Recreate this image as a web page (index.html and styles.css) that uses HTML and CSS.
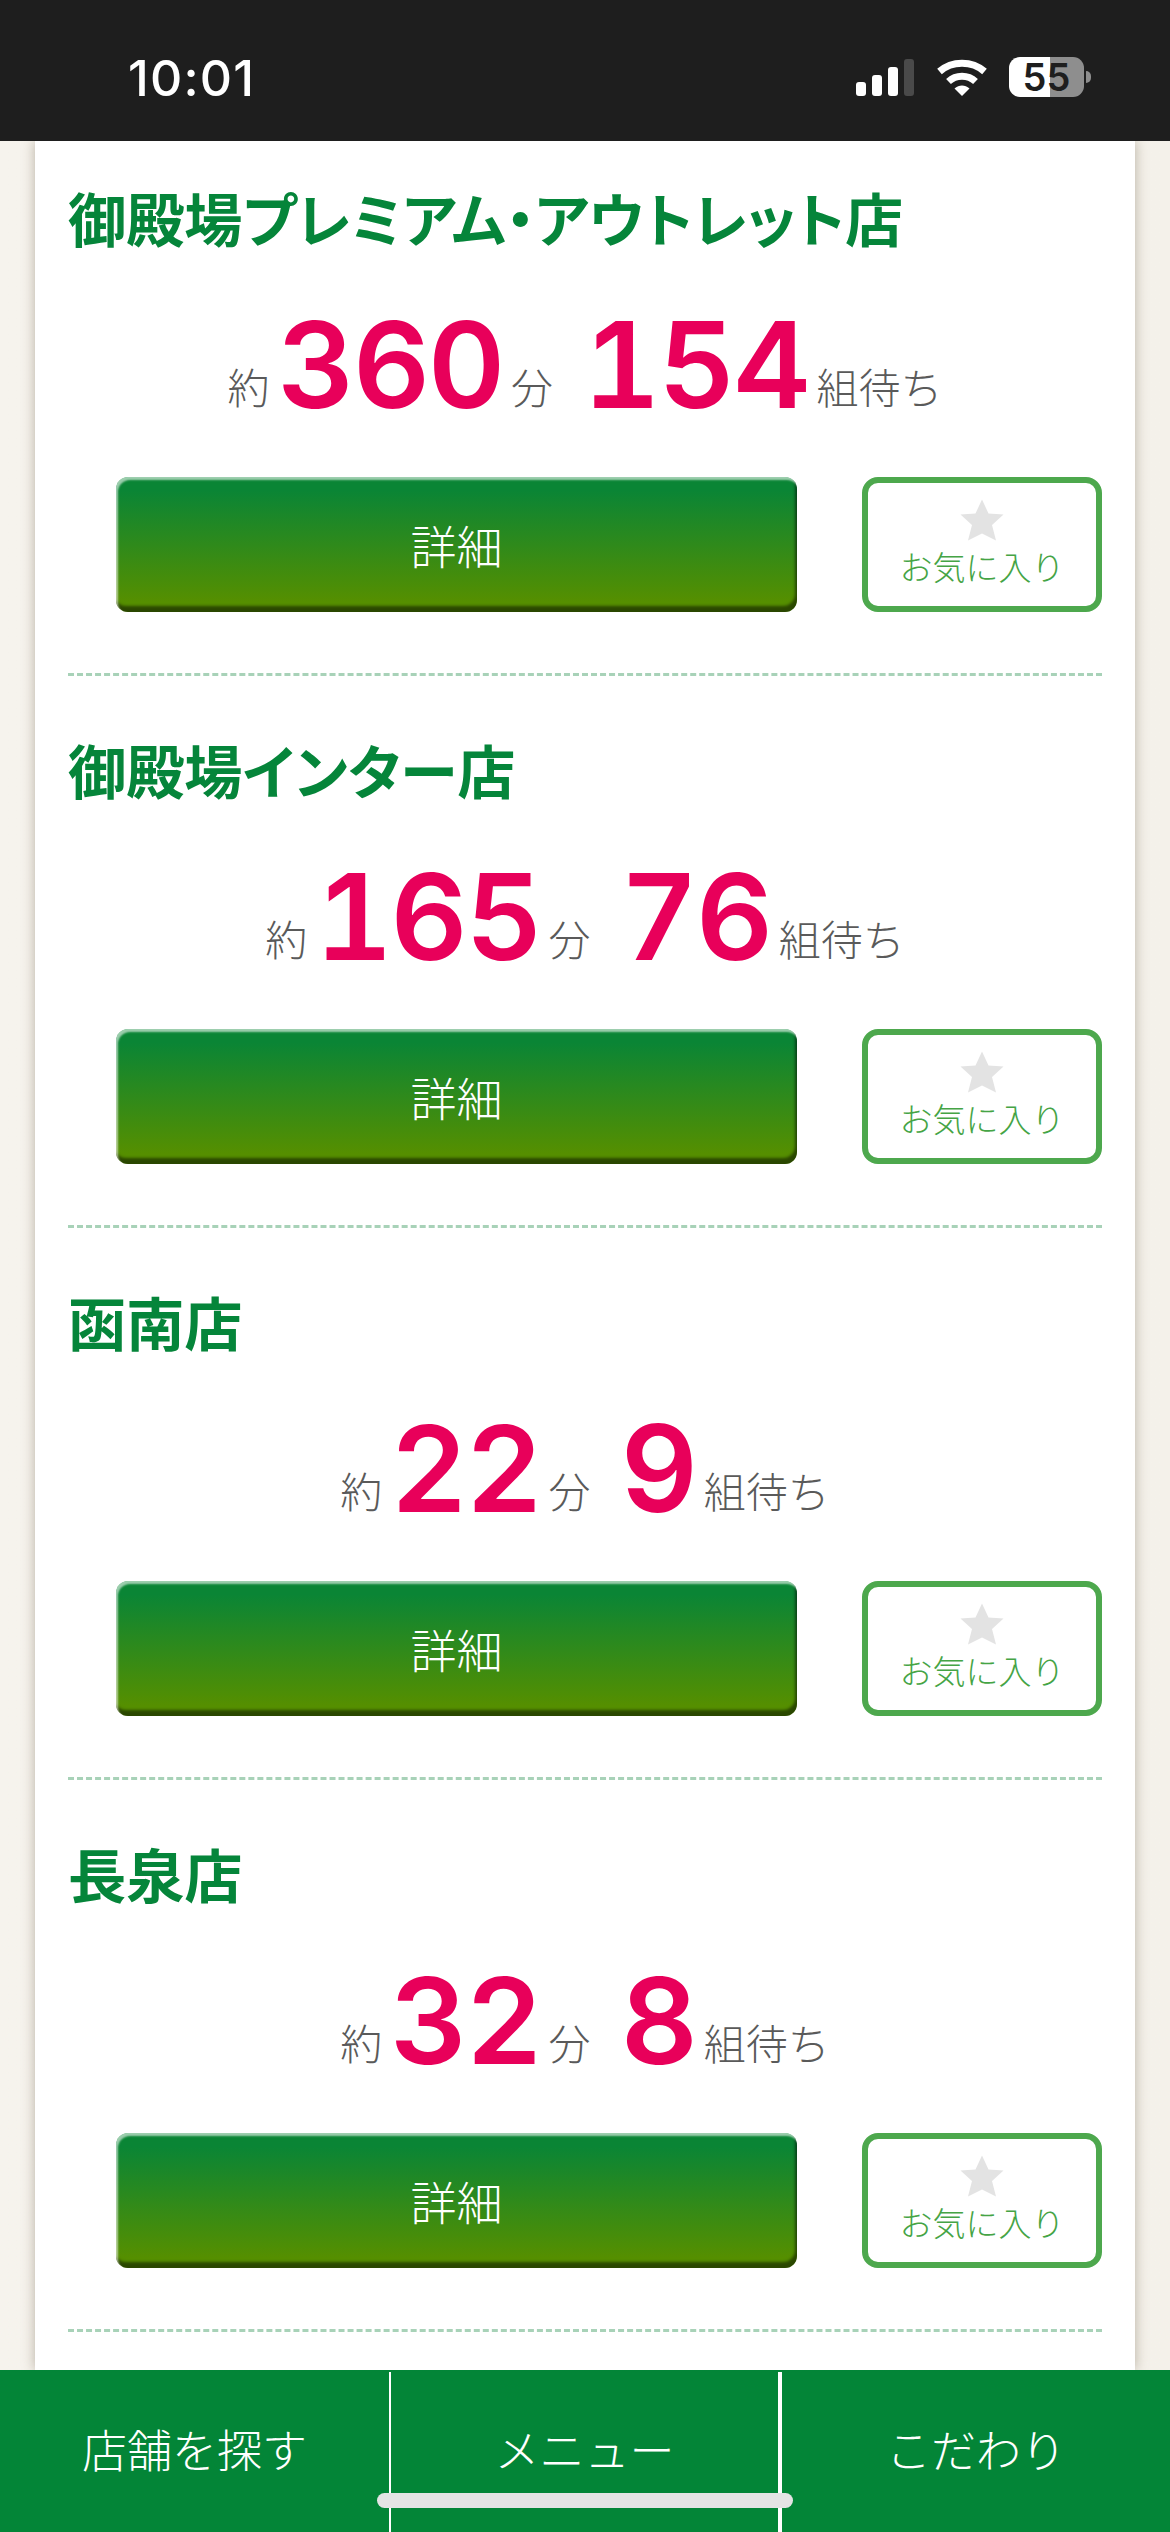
FILE: index.html
```html
<!DOCTYPE html>
<html lang="ja">
<head>
<meta charset="utf-8">
<title>店舗を探す</title>
<link rel="stylesheet" href="styles.css">
</head>
<body>
<div class="page">
  <header class="status">
    <span class="time">10:01</span>
    <div class="status-icons">
      <div class="signal"><i class="b1"></i><i class="b2"></i><i class="b3"></i><i class="b4"></i></div>
      <svg class="wifi" viewBox="0 0 50 37"><path class="arc" d="M2.500 12.500C15 1.500 35 1.500 47.500 12.500"/><path class="arc" d="M11.500 22.500C19 15.500 31 15.500 38.500 22.500"/><path class="dot" d="M17.500 29.500C22 25.500 28 25.500 32.500 29.500L25 37Z"/></svg>
      <div class="battery"><span class="battery-num">55</span></div>
      <i class="nub"></i>
    </div>
  </header>
  <main class="main">
    <div class="card">
      <section class="shop">
        <h2 class="shop-name">御殿場プレミアム・アウトレット店</h2>
        <p class="wait"><span>約</span><b>360</b><span>分</span><b class="groups">154</b><span>組待ち</span></p>
        <div class="actions"><a class="detail">詳細</a><a class="fav"><svg class="star" viewBox="0 0 44 44"><path d="M22 1.500L28.500 15.500L43.500 16.500L32 27L36 42.500L22 35.500L8 42.500L12 27L.5 16.500L15.500 15.500Z"/></svg><span>お気に入り</span></a></div>
      </section>
      <section class="shop">
        <h2 class="shop-name">御殿場インター店</h2>
        <p class="wait"><span>約</span><b>165</b><span>分</span><b class="groups">76</b><span>組待ち</span></p>
        <div class="actions"><a class="detail">詳細</a><a class="fav"><svg class="star" viewBox="0 0 44 44"><path d="M22 1.500L28.500 15.500L43.500 16.500L32 27L36 42.500L22 35.500L8 42.500L12 27L.5 16.500L15.500 15.500Z"/></svg><span>お気に入り</span></a></div>
      </section>
      <section class="shop">
        <h2 class="shop-name">函南店</h2>
        <p class="wait"><span>約</span><b>22</b><span>分</span><b class="groups">9</b><span>組待ち</span></p>
        <div class="actions"><a class="detail">詳細</a><a class="fav"><svg class="star" viewBox="0 0 44 44"><path d="M22 1.500L28.500 15.500L43.500 16.500L32 27L36 42.500L22 35.500L8 42.500L12 27L.5 16.500L15.500 15.500Z"/></svg><span>お気に入り</span></a></div>
      </section>
      <section class="shop">
        <h2 class="shop-name">長泉店</h2>
        <p class="wait"><span>約</span><b>32</b><span>分</span><b class="groups">8</b><span>組待ち</span></p>
        <div class="actions"><a class="detail">詳細</a><a class="fav"><svg class="star" viewBox="0 0 44 44"><path d="M22 1.500L28.500 15.500L43.500 16.500L32 27L36 42.500L22 35.500L8 42.500L12 27L.5 16.500L15.500 15.500Z"/></svg><span>お気に入り</span></a></div>
      </section>
    </div>
  </main>
  <nav class="tabs">
    <a class="tab">店舗を探す</a>
    <a class="tab">メニュー</a>
    <a class="tab">こだわり</a>
    <i class="home"></i>
  </nav>
</div>
</body>
</html>
```
FILE: styles.css
```css
* { box-sizing: border-box; }
html, body { margin: 0; padding: 0; }
body {
  font-family: "Noto Sans CJK JP", "Noto Sans", sans-serif;
  background: #f5f2ec;
}
.page {
  width: 1170px;
  height: 2532px;
  display: flex;
  flex-direction: column;
  overflow: hidden;
}
.status {
  flex: 0 0 141px;
  background: #1e1e1e;
  color: #fff;
  display: flex;
  align-items: flex-start;
  justify-content: space-between;
  padding: 48px 79px 0 128px;
}
.time {
  font-family: Inter, sans-serif;
  font-size: 50px;
  font-weight: 500;
  line-height: 60px;
  letter-spacing: 1.200px;
}
.status-icons {
  display: flex;
  align-items: flex-start;
  padding-top: 9px;
}
.signal {
  display: flex;
  align-items: flex-end;
  gap: 6px;
  height: 37px;
  margin-top: 2px;
  margin-right: 23px;
}
.signal i { display: block; width: 10px; border-radius: 3px; background: #fff; }
.signal .b1 { height: 14px; }
.signal .b2 { height: 21px; }
.signal .b3 { height: 29px; }
.signal .b4 { height: 37px; background: #4a4a4a; }
.wifi { width: 50px; height: 37px; margin-top: 2px; margin-right: 22px; }
.wifi .arc { fill: none; stroke: #fff; stroke-width: 7; }
.wifi .dot { fill: #fff; }
.battery {
  width: 75px;
  height: 40px;
  border-radius: 11px;
  background: linear-gradient(90deg, #fff 0, #fff 41px, #8e8e8e 41px, #8e8e8e 100%);
  color: #1e1e1e;
  font-family: Inter, sans-serif;
  font-size: 38px;
  font-weight: 600;
  line-height: 40px;
  text-align: center;
}
.nub {
  display: block;
  width: 5px;
  height: 12px;
  margin: 14px 0 0 2px;
  border-radius: 0 6px 6px 0;
  background: #8e8e8e;
}
.main {
  flex: 1 1 auto;
  min-height: 0;
  overflow: hidden;
  background: linear-gradient(90deg, #f6f3ed 0, #f4f1ea 100%);
}
.card {
  margin: 0 35px;
  padding: 0 33px;
  height: 100%;
  background: #fff;
  box-shadow: 0 0 12px rgba(90, 75, 50, .4);
}
.shop {
  height: 552px;
  padding-top: 65px;
  border-bottom: 3px dashed #a8d2b8;
}
.shop:first-child {
  height: 535px;
  padding-top: 48px;
}
.shop-name {
  margin: 0;
  font-size: 58.200px;
  line-height: 56px;
  font-weight: 700;
  color: #05853a;
  font-feature-settings: "palt";
}
.wait {
  margin: 0;
  height: 232px;
  padding-top: 60px;
  display: flex;
  justify-content: center;
  align-items: flex-start;
  color: #5a5a5a;
  font-size: 42px;
  font-weight: 300;
}
.wait span {
  line-height: 60px;
  padding-top: 51px;
}
.wait b {
  font-family: Inter, sans-serif;
  font-size: 120px;
  line-height: 120px;
  font-weight: 600;
  color: #e8005a;
  margin: 0 8px;
  letter-spacing: -2.500px;
  font-feature-settings: "tnum";
}
.wait .groups { margin-left: 30px; }
.actions {
  display: flex;
  justify-content: space-between;
  padding-left: 48px;
}
.detail {
  width: 681px;
  height: 135px;
  border-radius: 12px;
  background: linear-gradient(180deg, #0a8535 10%, #558f00 92%);
  box-shadow: inset 2px 3px 2px rgba(255, 255, 255, .6), inset -2px -6px 3px rgba(0, 0, 0, .5);
  color: #fff;
  font-size: 46px;
  font-weight: 300;
  line-height: 135px;
  text-align: center;
}
.fav {
  width: 240px;
  height: 135px;
  border: 6px solid #4da84d;
  border-radius: 16px;
  display: flex;
  flex-direction: column;
  align-items: center;
  color: #45a445;
  font-size: 33px;
  font-weight: 300;
  line-height: 44px;
  padding-top: 15px;
}
.star { display: block; width: 44px; height: 44px; flex: none; margin-bottom: 2px; }
.star path { fill: #e3e3e3; }
.tabs {
  flex: 0 0 162px;
  position: relative;
  display: grid;
  grid-template-columns: 389px 391px 390px;
  background: #038537;
  color: #fff;
  font-size: 45px;
  font-weight: 300;
}
.tab {
  margin-top: 2px;
  padding-bottom: 8px;
  display: flex;
  align-items: center;
  justify-content: center;
}
.tab + .tab { border-left: 2px solid #fff; }
.tab:nth-child(2) { border-right: 2px solid #fff; }
.home {
  position: absolute;
  left: 377px;
  top: 123px;
  width: 416px;
  height: 15px;
  border-radius: 8px;
  background: #e4e4e4;
}
```
